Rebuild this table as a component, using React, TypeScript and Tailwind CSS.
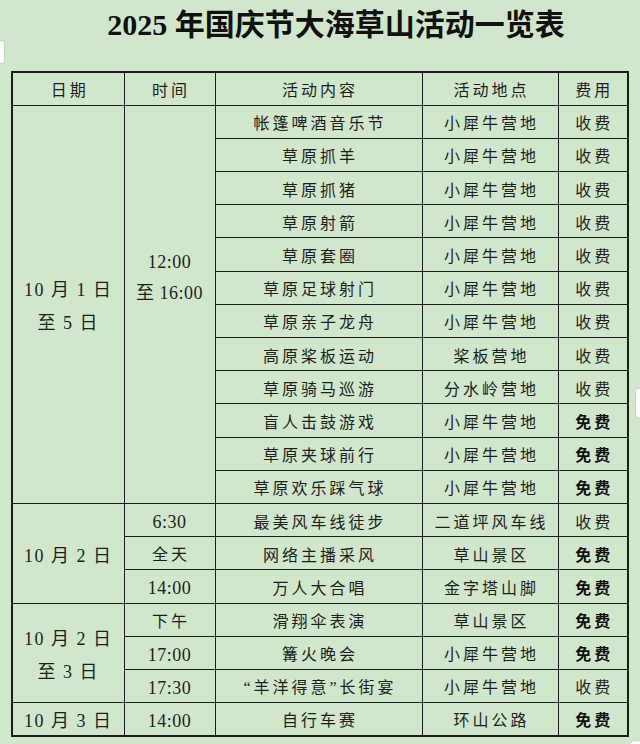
import React from "react";

type Row = {
  date?: { lines: string[]; span: number };
  time?: { lines: string[]; span: number; shift?: boolean };
  name: string;
  place: string;
  free: boolean;
};

const rows: Row[] = [
  { date: { lines: ["10 月 1 日", "至 5 日"], span: 12 }, time: { lines: ["12:00", "至 16:00"], span: 12, shift: true }, name: "帐篷啤酒音乐节", place: "小犀牛营地", free: false },
  { name: "草原抓羊", place: "小犀牛营地", free: false },
  { name: "草原抓猪", place: "小犀牛营地", free: false },
  { name: "草原射箭", place: "小犀牛营地", free: false },
  { name: "草原套圈", place: "小犀牛营地", free: false },
  { name: "草原足球射门", place: "小犀牛营地", free: false },
  { name: "草原亲子龙舟", place: "小犀牛营地", free: false },
  { name: "高原桨板运动", place: "桨板营地", free: false },
  { name: "草原骑马巡游", place: "分水岭营地", free: false },
  { name: "盲人击鼓游戏", place: "小犀牛营地", free: true },
  { name: "草原夹球前行", place: "小犀牛营地", free: true },
  { name: "草原欢乐踩气球", place: "小犀牛营地", free: true },
  { date: { lines: ["10 月 2 日"], span: 3 }, time: { lines: ["6:30"], span: 1 }, name: "最美风车线徒步", place: "二道坪风车线", free: false },
  { time: { lines: ["全天"], span: 1 }, name: "网络主播采风", place: "草山景区", free: true },
  { time: { lines: ["14:00"], span: 1 }, name: "万人大合唱", place: "金字塔山脚", free: true },
  { date: { lines: ["10 月 2 日", "至 3 日"], span: 3 }, time: { lines: ["下午"], span: 1 }, name: "滑翔伞表演", place: "草山景区", free: true },
  { time: { lines: ["17:00"], span: 1 }, name: "篝火晚会", place: "小犀牛营地", free: true },
  { time: { lines: ["17:30"], span: 1 }, name: "“羊洋得意”长街宴", place: "小犀牛营地", free: false },
  { date: { lines: ["10 月 3 日"], span: 1 }, time: { lines: ["14:00"], span: 1 }, name: "自行车赛", place: "环山公路", free: true },
];

const font = { fontFamily: '"Liberation Serif", "Noto Sans CJK SC", serif' };
const cell = "border-[1.5px] border-[#1c1c1c] text-center align-middle p-0 h-[33.2px]";
const cjk = "text-[16px] tracking-[3px] pl-[3px] pt-[5px]";

export default function App() {
  return (
    <div className="relative w-[640px] h-[744px] overflow-hidden bg-[#d0e7cc] text-[#1e1e1e]" style={font}>
      {/* stray white tabs at the edges */}
      <div className="absolute left-[-12px] top-[40px] w-[17px] h-[24px] rounded-[4px] bg-white border border-[#c8d6c4]" />
      <div className="absolute left-[635px] top-[388px] w-[20px] h-[30px] rounded-[4px] bg-white border border-[#c8d6c4]" />
      <div className="absolute left-[630px] top-[740px] w-[20px] h-[20px] rounded-[4px] bg-white border border-[#c8d6c4]" />

      <h1 className="h-[71px] flex items-center justify-center pl-[32px] pb-[22px] text-[30px] font-bold text-[#111]">
        2025 年国庆节大海草山活动一览表
      </h1>

      <table className="ml-[11px] w-[616px] border-collapse border-2 border-[#1c1c1c] table-fixed">
        <colgroup>
          <col className="w-[112px]" />
          <col className="w-[91px]" />
          <col className="w-[207px]" />
          <col className="w-[136px]" />
          <col className="w-[70px]" />
        </colgroup>
        <thead>
          <tr>
            {["日期", "时间", "活动内容", "活动地点", "费用"].map((h) => (
              <th key={h} className={`${cell} ${cjk} font-normal`}>{h}</th>
            ))}
          </tr>
        </thead>
        <tbody>
          {rows.map((r, i) => (
            <tr key={i}>
              {r.date && (
                <td rowSpan={r.date.span} className={cell}>
                  <div className="flex flex-col items-center gap-[11px] pt-[5px] text-[18px] tracking-[1.5px] leading-[22px]">
                    {r.date.lines.map((l) => <span key={l}>{l}</span>)}
                  </div>
                </td>
              )}
              {r.time && (
                <td rowSpan={r.time.span} className={cell}>
                  <div className={`flex flex-col items-center gap-[9px] leading-[22px] ${r.time.shift ? "pb-[54px]" : "pt-[4px]"} ${/\d/.test(r.time.lines[0]) ? "text-[18px] tracking-[0.5px]" : "text-[16px] tracking-[3px] pl-[3px]"}`}>
                    {r.time.lines.map((l) => <span key={l}>{l}</span>)}
                  </div>
                </td>
              )}
              <td className={`${cell} ${cjk}`}>{r.name}</td>
              <td className={`${cell} ${cjk}`}>{r.place}</td>
              <td className={`${cell} ${cjk} ${r.free ? "font-bold text-[#111]" : ""}`}>{r.free ? "免费" : "收费"}</td>
            </tr>
          ))}
        </tbody>
      </table>
    </div>
  );
}
